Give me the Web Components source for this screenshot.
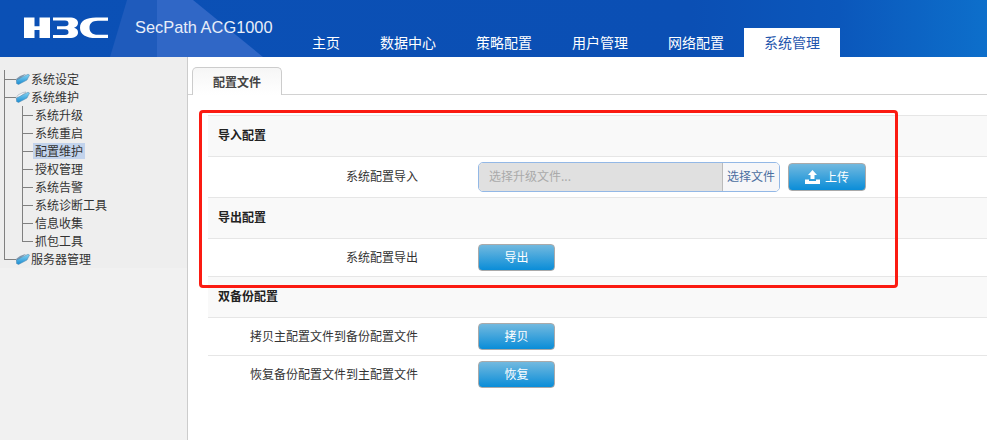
<!DOCTYPE html>
<html lang="zh"><head><meta charset="utf-8"><title>SecPath ACG1000</title>
<style>
html,body{margin:0;padding:0;height:100%;overflow:hidden;background:#fff}
body{font:12px "Noto Sans CJK SC","Liberation Sans",sans-serif;color:#222}
</style></head><body>
<app-shell>
  <app-header slot="header" product="SecPath ACG1000">
    <nav-tab>主页</nav-tab>
    <nav-tab>数据中心</nav-tab>
    <nav-tab>策略配置</nav-tab>
    <nav-tab>用户管理</nav-tab>
    <nav-tab>网络配置</nav-tab>
    <nav-tab active>系统管理</nav-tab>
  </app-header>
  <side-tree slot="side">
    <tree-node label="系统设定"></tree-node>
    <tree-node label="系统维护" open>
      <tree-leaf>系统升级</tree-leaf>
      <tree-leaf>系统重启</tree-leaf>
      <tree-leaf selected>配置维护</tree-leaf>
      <tree-leaf>授权管理</tree-leaf>
      <tree-leaf>系统告警</tree-leaf>
      <tree-leaf>系统诊断工具</tree-leaf>
      <tree-leaf>信息收集</tree-leaf>
      <tree-leaf last>抓包工具</tree-leaf>
    </tree-node>
    <tree-node label="服务器管理" last></tree-node>
  </side-tree>
  <config-page slot="main" tab="配置文件">
    <cfg-head>导入配置</cfg-head>
    <cfg-row label="系统配置导入">
      <file-picker placeholder="选择升级文件..." action="选择文件"></file-picker>
      <blue-button icon="upload">上传</blue-button>
    </cfg-row>
    <cfg-head>导出配置</cfg-head>
    <cfg-row label="系统配置导出"><blue-button>导出</blue-button></cfg-row>
    <cfg-head>双备份配置</cfg-head>
    <cfg-row label="拷贝主配置文件到备份配置文件"><blue-button>拷贝</blue-button></cfg-row>
    <cfg-row label="恢复备份配置文件到主配置文件" plain><blue-button>恢复</blue-button></cfg-row>
  </config-page>
</app-shell>
<script>
function def(name, css, html){
  customElements.define(name, class extends HTMLElement{
    connectedCallback(){
      if(this.shadowRoot) return;
      const r=this.attachShadow({mode:'open'});
      const t=document.createElement('template');
      t.innerHTML='<style>'+css+'</style>'+(typeof html==='function'?html(this):html);
      r.appendChild(t.content);
    }
  });
}
def('app-shell',`
:host{display:flex;flex-direction:column;height:440px;width:987px;overflow:hidden}
.body{display:flex;flex:1;min-height:0}
`,`<slot name="header"></slot><div class="body"><slot name="side"></slot><slot name="main"></slot></div>`);

def('app-header',`
:host{display:flex;height:57px;position:relative;overflow:hidden;flex:none;
 background:linear-gradient(90deg,#0b50b5 0,#0b4fb4 70%,#0b57bb 85%,#0d6fcb 100%)}
.tri{position:absolute;left:0;top:0;width:300px;height:57px}
.logo{flex:none;width:90px;height:26px;margin:15px 0 0 22px;position:relative}
.product{flex:none;width:157px;margin:16px 0 0 23px;font:16.4px/22px "Liberation Sans",sans-serif;color:#e8eef9;position:relative;white-space:nowrap}
nav{display:flex;align-items:flex-end;height:57px;position:relative}
`,el=>`
<svg class="tri" viewBox="0 0 300 57" aria-hidden="true"><polygon points="110,57 127,0 157,0 157,57" fill="#1f5bbc"/><polygon points="157,57 157,0 193,0 263,57" fill="#3067c6"/></svg>
<svg class="logo" viewBox="22 15 90 26" aria-label="H3C logo" role="img"><g fill="#fff">
<path d="M24 17.5h10.5v8.7h5V17.5H50V38H39.5V30h-5V38H24z"/>
<path d="M53 17.5H69C75 17.5 78 19.5 78 23C78 25.3 76.5 27 74 27.7C76.8 28.4 78 30 78 32.5C78 36 75 38 69 38H53V35H65C67.5 35 68.5 34 68.5 32.2C68.5 30.5 67.5 29.3 65 29.3H57V26.2H65C67.5 26.2 68.5 25.2 68.5 23.5C68.5 21.7 67.5 20.5 65 20.5H53Z"/>
<path d="M108 20.8V17.5H96C86 17.5 80 21 80 27.7C80 34.5 86 38 96 38H108V34.8H98C92 34.8 89.5 31.8 89.5 27.7C89.5 23.6 92 20.8 98 20.8Z"/>
</g></svg>
<div class="product">${el.getAttribute('product')}</div>
<nav><slot></slot></nav>`);

def('nav-tab',`
:host{display:flex;align-items:center;justify-content:center;height:29px;padding:0 20px;color:#fff;font:14px/29px "Noto Sans CJK SC",sans-serif;white-space:nowrap}
:host([active]){background:#fff;color:#1f56ad}
`,`<slot></slot>`);

def('side-tree',`
:host{display:block;flex:none;width:187px;box-sizing:content-box;border-right:1px solid #ccc;background:#f1f1f1}
.tree{background:#eee;padding:13px 0 0 4px;height:198px}
`,`<div class="tree"><slot></slot></div>`);

def('tree-node',`
:host{display:block;background:linear-gradient(#808080,#808080) 0 0/1px 100% no-repeat}
:host([last]){background-size:1px 10px}
.row{display:flex;align-items:center;height:18px;position:relative}
.h{flex:none;width:12px;height:1px;background:#808080}
svg{flex:none;width:15px;height:12px;margin-left:-1px}
.t{margin-left:1px;font-size:12px;line-height:18px;color:#333;white-space:nowrap}
.kids{display:block;margin-left:18px}
`,el=>{
  const open=el.hasAttribute('open');
  return `<div class="row"><span class="h"></span>
  <svg viewBox="0 0 15 12" aria-hidden="true"><defs><linearGradient id="f" x1="0" y1="0" x2="0" y2="1"><stop offset="0" stop-color="#86d4f2"/><stop offset="1" stop-color="#1a8cd2"/></linearGradient></defs>
  ${open?'<polygon points="1,7 3,4 8,1.5 11,1 6,5 2,9" fill="#f4f6f9" stroke="#a9b4c0" stroke-width=".7"/>':'<polygon points="1,6 5,3 9,1.5 11,1 6,5 2,9" fill="#7f97ad"/>'}
  <polygon points="1.5,7 13,1.2 14.5,2 12,7 3.5,11.5 1.5,10.5" fill="url(#f)" stroke="#4f86ad" stroke-width=".5"/></svg>
  <span class="t">${el.getAttribute('label')}</span></div>
  ${open?'<div class="kids"><slot></slot></div>':''}`;
});

def('tree-leaf',`
:host{display:flex;align-items:center;height:18px;background:linear-gradient(#808080,#808080) 0 0/1px 100% no-repeat}
:host([last]){background-size:1px 10px}
.h{flex:none;width:11px;height:1px;background:#808080}
.t{padding:0 2px;line-height:16px;height:16px;font-size:12px;color:#333;white-space:nowrap}
:host([selected]) .t{background:#c2d3ec}
`,`<span class="h"></span><span class="t"><slot></slot></span>`);

def('config-page',`
:host{display:block;flex:1;min-width:0;position:relative;background:#fff}
.bar{height:38px;box-sizing:border-box;padding:10px 0 0 4px;border-bottom:1px solid #d2d2d2;display:flex}
.tab{box-sizing:border-box;width:90px;height:28px;border:1px solid #ccc;border-bottom:0;border-radius:5px 5px 0 0;
 background:linear-gradient(#f6f6f6,#fff);text-align:center;font:bold 12px/27px "Noto Sans CJK SC",sans-serif;color:#444}
.list{margin:20px 0 0 20px;border-top:1px solid #e6e6e6}
.mark{position:absolute;left:11px;top:53px;width:699px;height:178px;box-sizing:border-box;border:3px solid #fb1b12;border-radius:4px;pointer-events:none}
`,el=>`<div class="bar"><div class="tab">${el.getAttribute('tab')}</div></div>
<div class="list"><slot></slot></div><div class="mark"></div>`);

def('cfg-head',`
:host{display:block;height:41px;box-sizing:border-box;border-bottom:1px solid #e6e6e6;background:#f9f9f9;padding-left:10px;
 font:bold 12px/38px "Noto Sans CJK SC",sans-serif;color:#222}
`,`<slot></slot>`);

def('cfg-row',`
:host{display:flex;align-items:center;box-sizing:border-box;padding:5px 0;border-bottom:1px solid #e6e6e6}
:host([plain]){border-bottom:0}
.l{flex:none;width:210px;text-align:right;font-size:12px;line-height:16px;padding-bottom:2px;color:#333;white-space:nowrap}
.c{display:flex;align-items:center;gap:8px;margin-left:60px}
`,el=>`<div class="l">${el.getAttribute('label')}</div><div class="c"><slot></slot></div>`);

def('file-picker',`
:host{display:flex;box-sizing:border-box;width:302px;height:30px;border:1px solid #93b8e6;border-radius:5px;overflow:hidden;font-size:12px}
.i{flex:none;width:244px;box-sizing:border-box;padding-left:10px;background:#e0e0e0;border-right:1px solid #bbb;color:#aaa;line-height:26px}
.b{flex:1;text-align:center;background:#f6f6f8;color:#4c6ea0;line-height:26px;white-space:nowrap}
`,el=>`<div class="i">${el.getAttribute('placeholder')}</div><div class="b">${el.getAttribute('action')}</div>`);

def('blue-button',`
:host{display:flex;align-items:center;justify-content:center;gap:5px;box-sizing:border-box;width:77px;height:27px;padding-bottom:1px;
 border:1px solid #aaa;border-radius:4px;background:linear-gradient(#72b9df,#0a8dd8);color:#fff;font:12px/24px "Noto Sans CJK SC",sans-serif}
:host([icon]){width:78px;height:28px;padding-bottom:0}
svg{width:15px;height:14px;flex:none}
`,el=>`${el.getAttribute('icon')?'<svg viewBox="0 0 15 14" aria-hidden="true"><path fill="#fff" d="M7.5 0 12 5H9.5V9H5.5V5H3ZM0 9.5H4V11H11V9.5H15V14H0Z"/></svg>':''}<slot></slot>`);
</script>
</body></html>
